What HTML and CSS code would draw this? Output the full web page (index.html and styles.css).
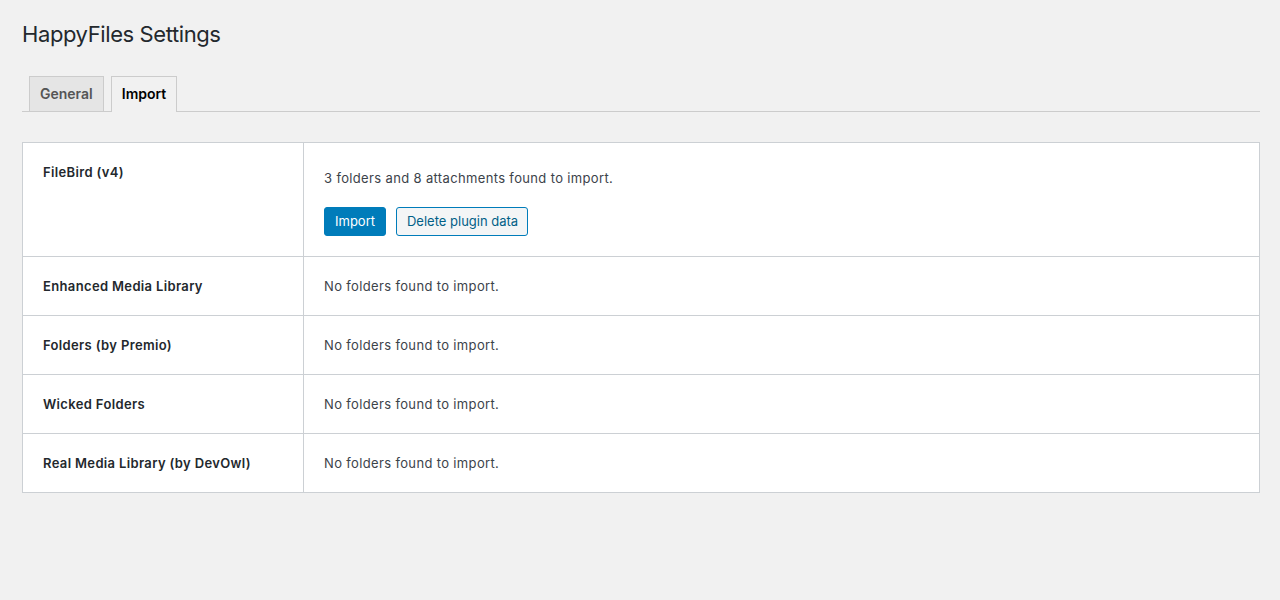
FILE: index.html
```html
<!DOCTYPE html>
<html>
<head>
<meta charset="utf-8">
<link rel="stylesheet" href="styles.css">
</head>
<body>
<div class="wrap">
  <h1 class="title">HappyFiles Settings</h1>
  <nav class="tabs">
    <a class="tab">General</a>
    <a class="tab active">Import</a>
  </nav>
  <table class="imports">
    <tr>
      <th>FileBird (v4)</th>
      <td>
        <p class="found">3 folders and 8 attachments found to import.</p>
        <div class="actions">
          <button class="btn primary">Import</button>
          <button class="btn secondary">Delete plugin data</button>
        </div>
      </td>
    </tr>
    <tr><th>Enhanced Media Library</th><td>No folders found to import.</td></tr>
    <tr><th>Folders (by Premio)</th><td>No folders found to import.</td></tr>
    <tr><th>Wicked Folders</th><td>No folders found to import.</td></tr>
    <tr><th>Real Media Library (by DevOwl)</th><td>No folders found to import.</td></tr>
  </table>
</div>
</body>
</html>
```
FILE: styles.css
```css
html, body {
  margin: 0;
  padding: 0;
  background: #f1f1f1;
}
body {
  font-family: Inter, "Noto Sans", sans-serif;
  font-size: 13px;
  color: #23282d;
  width: 1280px;
  height: 600px;
}
.wrap {
  padding: 20px 20px 0 22px;
}
.title {
  margin: 0;
  font-size: 22px;
  font-weight: 400;
  letter-spacing: -0.4px;
  line-height: 29px;
  color: #23282d;
}
.tabs {
  display: flex;
  margin-top: 27px;
  border-bottom: 1px solid #ccc;
  padding-left: 7px;
  gap: 7px;
}
.tab {
  display: block;
  padding: 5px 10px 0;
  line-height: 24px;
  font-size: 14px;
  font-weight: 600;
  color: #555;
  background: #e5e5e5;
  border: 1px solid #ccc;
  border-bottom: none;
  height: 35px;
  box-sizing: border-box;
  margin-bottom: -1px;
}
.tab.active {
  background: #f1f1f1;
  color: #000;
  height: 36px;
}
.imports {
  margin-top: 30px;
  width: 1238px;
  border-collapse: collapse;
  background: #fff;
  border: 1px solid #ccd0d4;
}
.imports th, .imports td {
  border: 1px solid #ccd0d4;
  vertical-align: top;
  text-align: left;
  padding: 20px;
  line-height: 18px;
  height: 18px;
  letter-spacing: 0.35px;
}
.imports th {
  width: 240px;
  font-weight: 600;
  font-size: 13px;
  color: #23282d;
}
.imports td {
  color: #3c434a;
}
.found {
  margin: 6px 0 20px;
}
.actions {
  display: flex;
  gap: 10px;
}
.btn {
  font-family: inherit;
  font-size: 13px;
  letter-spacing: 0;
  line-height: 27px;
  height: 29px;
  padding: 0 10px;
  border-radius: 3px;
  cursor: pointer;
  box-sizing: border-box;
}
.btn.primary {
  background: #007cba;
  border: 1px solid #007cba;
  color: #fff;
}
.btn.secondary {
  background: #f3f5f6;
  border: 1px solid #007cba;
  color: #016087;
  padding: 0 9px 0 10px;
}
```
